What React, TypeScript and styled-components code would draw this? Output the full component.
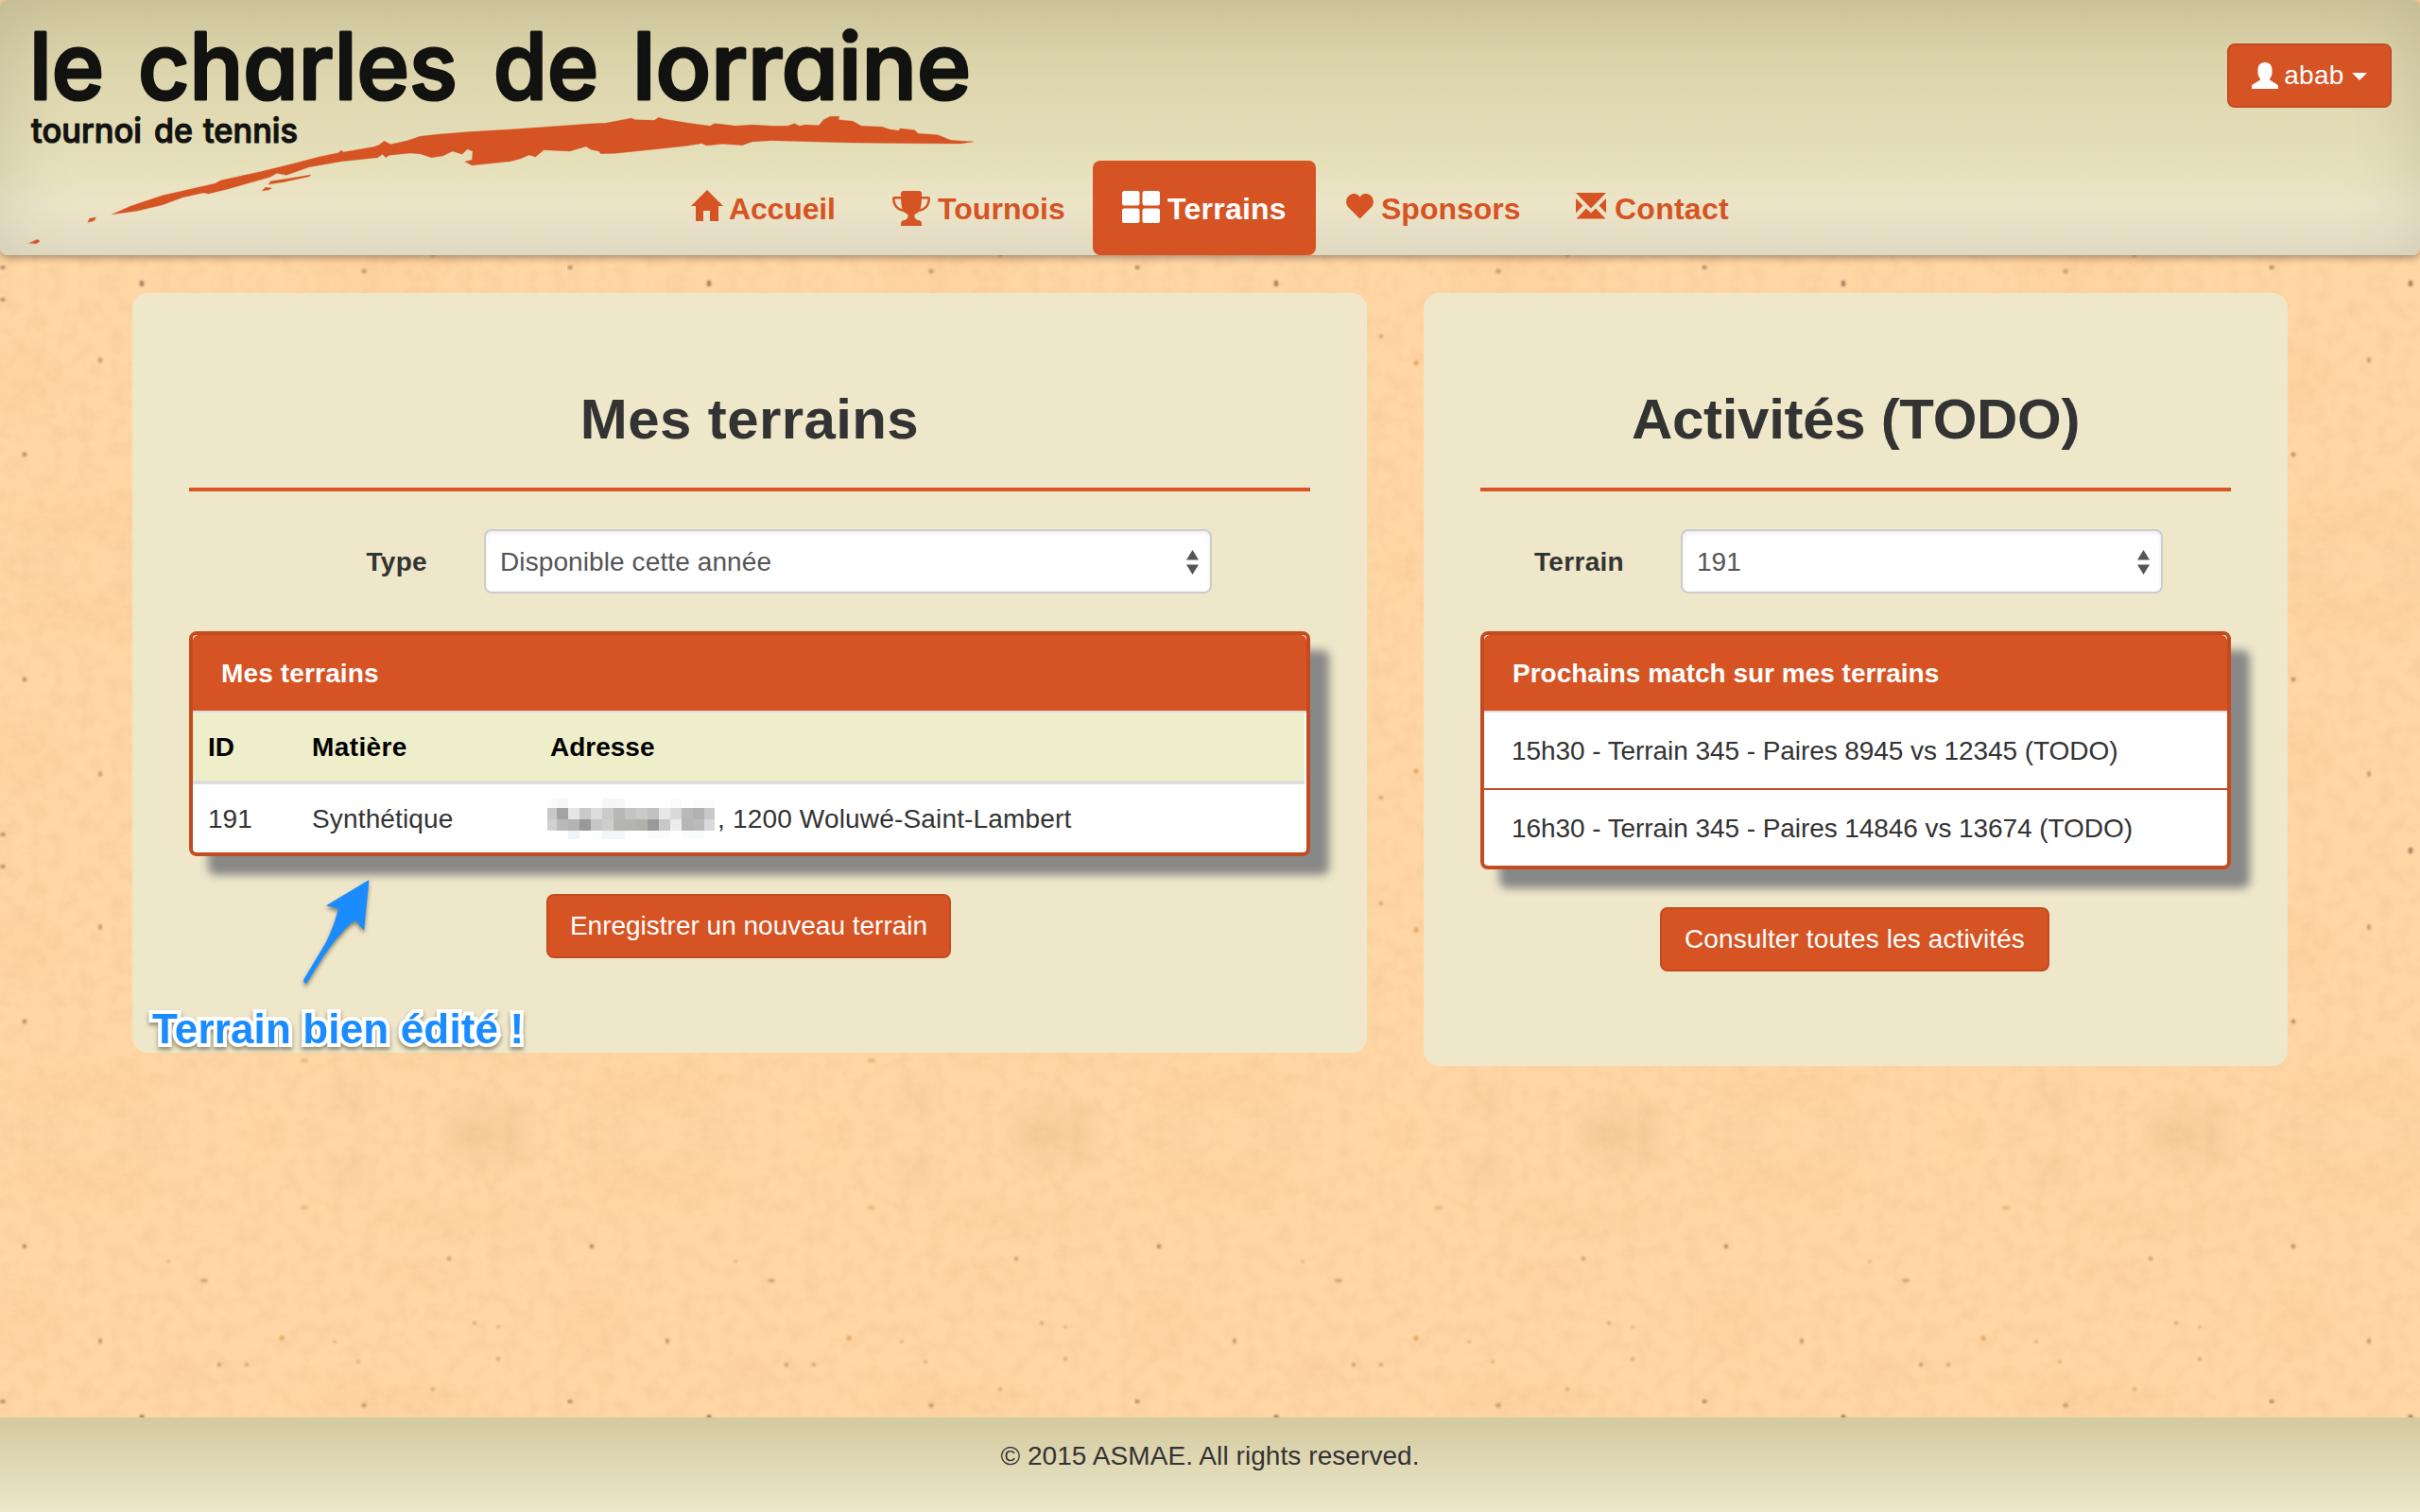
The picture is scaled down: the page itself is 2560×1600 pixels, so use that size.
import React from 'react';
import styled, { createGlobalStyle } from 'styled-components';

const ORANGE = '#d65323';
const RUST = '#c34b20';
const SAND = '#eee7ca';

const GlobalStyle = createGlobalStyle`
  * { box-sizing: border-box; }
  body {
    margin: 0;
    background: #ffd6a4;
    color: #333;
    font: 28px/40px "Liberation Sans", Arial, Helvetica, sans-serif;
  }
`;

const Page = styled.div`
  position: relative;
  isolation: isolate;
  display: flex;
  flex-direction: column;
  height: 1600px;
  overflow: hidden;
`;

const Backdrop = styled.svg`
  position: absolute;
  inset: 0;
  width: 100%;
  height: 100%;
  z-index: -1;
`;

const Header = styled.header`
  display: grid;
  grid-template-columns: 700px 1fr 700px;
  height: 270px;
  flex: none;
  border-radius: 8px;
  background: linear-gradient(#d6cda2, #e6e0bb 66%, #eee6c9 80%, #ebe5cc);
  box-shadow: inset 0 0 80px rgba(0, 0, 0, 0.11), 0 2px 8px rgba(0, 0, 0, 0.4);
`;

const Logo = styled.svg`
  width: 1040px;
  height: 270px;
  overflow: visible;
  font-family: Inter, "DejaVu Sans", sans-serif;
  font-feature-settings: "cv11" 1, "ss03" 1;
  fill: #121310;
  stroke: #121310;
  stroke-linejoin: round;
  stroke-linecap: round;
`;

const Nav = styled.nav`
  display: flex;
  align-items: flex-end;
  z-index: 1;
`;

const Tab = styled.a<{ $active?: boolean; $width: number }>`
  display: flex;
  align-items: flex-start;
  flex: none;
  width: ${p => p.$width}px;
  height: 100px;
  padding: 29px 0 0 30px;
  border-radius: 8px;
  color: ${p => (p.$active ? '#fff' : ORANGE)};
  background: ${p => (p.$active ? ORANGE : 'transparent')};
  font-size: 32px;
  line-height: 44px;
  font-weight: bold;
  white-space: nowrap;
`;

const TabText = styled.span<{ $spacing?: number }>`
  letter-spacing: ${p => p.$spacing ?? 0}px;
`;

const Icon = styled.svg<{ $top?: number; $gap: number; $left?: number }>`
  flex: none;
  fill: currentColor;
  margin: ${p => p.$top ?? 0}px ${p => p.$gap}px 0 ${p => p.$left ?? 0}px;
`;

const UserArea = styled.div`
  display: flex;
  justify-content: flex-end;
  align-items: flex-start;
  padding: 46px 30px 0 0;
`;

const Button = styled.button<{ $width: number; $spacing?: number }>`
  display: flex;
  align-items: center;
  justify-content: center;
  width: ${p => p.$width}px;
  height: 68px;
  padding: 0;
  border: 2px solid ${RUST};
  border-radius: 8px;
  background: ${ORANGE};
  color: #fff;
  font: inherit;
  letter-spacing: ${p => p.$spacing ?? 0}px;
  white-space: nowrap;
`;

const Caret = styled.span`
  margin: 2px 0 0 8px;
  border: 8px solid transparent;
  border-top-color: #fff;
  border-bottom: 0;
`;

const Main = styled.main`
  flex: 1;
  display: flex;
  align-items: flex-start;
  gap: 60px;
  padding: 40px 140px 0;
`;

const Panel = styled.section<{ $width: number }>`
  position: relative;
  width: ${p => p.$width}px;
  padding: 101px 60px 100px;
  border-radius: 16px;
  background: ${SAND};
`;

const Title = styled.h1<{ $spacing: number }>`
  margin: 0 0 39px;
  font-size: 60px;
  line-height: 66px;
  letter-spacing: ${p => p.$spacing}px;
  text-align: center;
`;

const Rule = styled.hr`
  height: 4px;
  margin: 0 0 40px;
  border: 0;
  background: #dc5423;
`;

const Field = styled.div<{ $label: number; $select: number }>`
  display: grid;
  grid-template-columns: ${p => p.$label}px ${p => p.$select}px;
  gap: 60px;
  align-items: center;
  margin-bottom: 40px;
`;

const Label = styled.label`
  padding-top: 1px;
  text-align: right;
  font-weight: bold;
  letter-spacing: 0.3px;
`;

const Select = styled.div<{ $spacing?: number }>`
  display: flex;
  align-items: center;
  justify-content: space-between;
  height: 68px;
  padding: 1px 12px 0 15px;
  border: 2px solid #ccc;
  border-radius: 8px;
  background: #fff;
  box-shadow: inset 0 2px 4px rgba(0, 0, 0, 0.08);
  color: #555;
  letter-spacing: ${p => p.$spacing ?? 0}px;
`;

const Box = styled.div`
  border: 4px solid ${RUST};
  border-radius: 8px;
  background: #fff;
  box-shadow: 20px 20px 10px #888;
`;

const BoxHead = styled.div<{ $spacing?: number }>`
  height: 82px;
  padding: 21px 30px 19px;
  border-bottom: 2px solid #ddd;
  border-radius: 6px 6px 0 0;
  background: ${ORANGE};
  color: #fff;
  font-weight: bold;
  letter-spacing: ${p => p.$spacing ?? 0}px;
`;

const Table = styled.div`
  display: grid;
  grid-template-columns: 110px 252px 1fr;
`;

const HeadRow = styled.div`
  display: grid;
  grid-template-columns: subgrid;
  grid-column: 1 / -1;
  height: 76px;
  margin-right: 2px;
  border-bottom: 4px solid #ddd;
  background: #eeeecb;
  color: #000;
  font-weight: bold;
`;

const BodyRow = styled.div`
  display: grid;
  grid-template-columns: subgrid;
  grid-column: 1 / -1;
  height: 72px;
`;

const Cell = styled.div<{ $spacing?: number }>`
  display: flex;
  align-items: center;
  height: 72px;
  padding: 1px 16px 0;
  letter-spacing: ${p => p.$spacing ?? 0}px;
  white-space: nowrap;
`;

const Mosaic = styled.span`
  display: grid;
  grid-template-columns: 10px repeat(13, 12px) 11px;
  grid-template-rows: 10px 12px 12px 9px;
  width: 177px;
  margin: 0 3px 0 -3px;
`;

const Tile = styled.i<{ $shade: string }>`
  background: ${p => p.$shade};
`;

const Item = styled.div`
  height: 80px;
  padding: 21px 29px 19px;
  letter-spacing: -0.07px;
  & + & {
    height: 82px;
    border-top: 2px solid ${RUST};
  }
`;

const Actions = styled.div`
  display: flex;
  justify-content: center;
  margin: 40px 1px 0 -1px;
`;

const Annotation = styled.div`
  position: absolute;
  left: 21px;
  bottom: -11px;
  width: 400px;
  height: 200px;
`;

const Arrow = styled.svg`
  display: block;
  width: 80px;
  height: 124px;
  margin-left: 154px;
  fill: #1a8cff;
  filter: drop-shadow(0 3px 2px rgba(60, 50, 20, 0.55));
`;

const Note = styled.div`
  margin-top: 15px;
  color: #1a8cff;
  font-size: 44px;
  line-height: 50px;
  font-weight: bold;
  letter-spacing: 0.15px;
  white-space: nowrap;
  -webkit-text-stroke: 8px #fff;
  paint-order: stroke fill;
  filter: drop-shadow(0 3px 2px rgba(60, 50, 20, 0.5));
`;

const Footer = styled.footer`
  flex: none;
  height: 100px;
  padding-top: 21px;
  background: linear-gradient(#d3ca9f, #ede7ca);
  letter-spacing: 0.07px;
  text-align: center;
`;

const FLECKS: [number, number, number, number, string][] = [
  [26, 419, 2.4, 2.4, '#a97c55'], [216, 455, 4, 1.8, '#c09468'], [106, 519, 2, 3, '#b98a66'],
  [298, 516, 2.6, 2.8, '#dd9d52'], [232, 544, 2.2, 2.2, '#bd8d60'], [261, 544, 2.2, 2, '#c59667'],
  [475, 432, 2.5, 2.4, '#c89a68'], [3, 583, 2.8, 2, '#a67b58'], [150, 599, 2.4, 2, '#7a5c3c'],
  [385, 587, 2.8, 2.6, '#bb945c'], [527, 538, 2, 2.2, '#cf9c6c'], [502, 500, 2, 2, '#cd9c6b'],
  [527, 504, 1.8, 1.6, '#c99a70'], [379, 541, 2, 1.8, '#cfa26c'], [178, 435, 2, 1.8, '#d8ab80'],
  [354, 520, 2, 1.8, '#d5a878'], [322, 378, 4, 2, '#dcb27c'], [458, 570, 2.4, 2.6, '#d6aa76'],
];

const BLOTCHES: [number, number, number, number, string, number][] = [
  [370, 340, 26, 18, '#b08a50', 0.06], [515, 312, 46, 30, '#b08a50', 0.06],
  [278, 300, 6, 12, '#f0a040', 0.1], [150, 314, 28, 7, '#b88850', 0.08],
  [48, 316, 26, 14, '#c89058', 0.05], [190, 555, 30, 10, '#e08870', 0.1],
  [90, 350, 80, 20, '#f0a050', 0.06], [440, 445, 50, 14, '#ef9f70', 0.05],
  [20, 500, 50, 40, '#f4a070', 0.05], [400, 580, 80, 14, '#f29a50', 0.07],
  [480, 390, 90, 12, '#d4a060', 0.06],
];

const Paper = () => (
  <Backdrop aria-hidden="true">
    <defs>
      <filter id="grain" x="0" y="0" width="100%" height="100%">
        <feTurbulence type="fractalNoise" baseFrequency="0.06 0.06" numOctaves="4" seed="8" stitchTiles="stitch" />
        <feColorMatrix values="0 0 0 0 0.82  0 0 0 0 0.5  0 0 0 0 0.25  1.8 0 0 0 -0.72" />
      </filter>
      <filter id="soft" x="-100%" y="-100%" width="300%" height="300%">
        <feGaussianBlur stdDeviation="10" />
      </filter>
      <filter id="fleck" x="-100%" y="-100%" width="300%" height="300%">
        <feGaussianBlur stdDeviation="0.9" />
      </filter>
      <pattern id="paper" y="300" width="600" height="600" patternUnits="userSpaceOnUse">
        <g id="half">
          <rect y="300" width="600" height="300" filter="url(#grain)" opacity="0.32" />
          {BLOTCHES.map(([x, y, rx, ry, c, o], i) => (
            <ellipse key={i} cx={x} cy={y} rx={rx} ry={ry} fill={c} opacity={o} filter="url(#soft)" />
          ))}
          {FLECKS.map(([x, y, rx, ry, c], i) => (
            <ellipse key={i} cx={x} cy={y} rx={rx} ry={ry} fill={c} opacity="0.8" filter="url(#fleck)" />
          ))}
        </g>
        <use href="#half" transform="matrix(1 0 0 -1 0 600)" />
      </pattern>
    </defs>
    <rect width="100%" height="100%" fill="url(#paper)" />
  </Backdrop>
);

const BRUSH =
  'M345 680L400 655 500 620 660 583 680 572 800 545 900 520 980 498 1040 485 1048 477 1055 483 1150 466 1165 460 1180 448 1200 458 1250 447 1290 433 1350 426 1450 418 1568 411 ' +
  '1650 405 1810 393 1860 391 1940 375 1950 380 2010 382 2023 373 2040 378 2110 390 2180 400 2195 392 2260 400 2310 396 2370 400 2420 400 2440 392 2455 400 2475 396 2515 398 2530 380 2550 370 2578 370 2575 380 ' +
  '2620 385 2645 400 2710 403 2730 410 2760 415 2765 408 2810 413 2820 424 2880 428 2920 445 2990 450 2950 456 2810 455 2610 453 2370 446 2310 450 2280 461 2220 457 2170 462 2155 455 2110 463 2010 474 1890 487 1845 488 1840 480 1815 475 1800 465 1750 480 1670 476 1645 498 1625 492 1600 503 ' +
  '1568 512 1450 525 1428 513 1450 508 1452 480 1435 473 1420 490 1390 480 1360 495 1325 500 1290 488 1260 486 1195 493 1185 500 1175 490 1160 500 1050 512 950 530 880 556 850 550 830 562 700 600 640 615 625 612 560 627 500 650 420 670Z' +
  'M805 605L815 595 835 597 825 603ZM825 585L832 575 880 568 955 555 950 560 870 578ZM270 706L275 694 295 690 290 700ZM90 772L115 760 122 766 112 773Z';

const Word = ({ x, y, end, children }: { x: number; y: number; end: number; children: string }) => (
  <text x={x} y={y} textLength={end - x} lengthAdjust="spacingAndGlyphs">{children}</text>
);

const Brand = () => (
  <Logo>
    <g fontSize="97" fontWeight="500" strokeWidth="3.2">
      <Word x={31} y={104.5} end={110}>le</Word>
      <Word x={146} y={104.5} end={484}>charles</Word>
      <Word x={522} y={104.5} end={633}>de</Word>
      <Word x={669} y={104.5} end={1027}>lorraine</Word>
    </g>
    <g fontSize="36" fontWeight="500" strokeWidth="1.2">
      <Word x={33} y={150.5} end={150}>tournoi</Word>
      <Word x={163} y={150.5} end={204}>de</Word>
      <Word x={215} y={150.5} end={315}>tennis</Word>
    </g>
    <path d={BRUSH} transform="scale(0.3444 0.3333)" fill={ORANGE} stroke={ORANGE} strokeWidth="1" />
  </Logo>
);

const Sorter = () => (
  <svg width="13" height="26" viewBox="0 0 13 26" fill="#555">
    <path d="M6.5 0L13 10.5H0ZM6.5 26L13 15.5H0Z" />
  </svg>
);

const W = '#fff';
const REDACTED = [
  ['#fbfbfb', '#f7f7f7', W, W, W, '#f5f5f5', '#f6f6f6', W, W, W, W, '#fbfbfb', W, '#fcfcfc', '#fcfcfc'],
  ['#c8c8c8', '#a3a3a3', '#e5e5e5', '#c9c9c9', '#dcdcdc', '#cacaca', '#b8b8b8', '#c4c4c4', '#cacaca', '#c1c1c1', '#e7e7e7', '#d9d9d9', '#b9b9b9', '#b2b2b2', '#c8c8c8'],
  ['#d1d1d1', '#b9b9b9', '#b3b3b3', '#999', '#c6c6c6', '#cecece', '#b5b5b1', '#b4b4b0', '#b0b0ac', '#999', '#c8c8c8', '#ececec', '#b6b6b6', '#bababa', '#d9d9d9'],
  [W, W, '#eef6fa', W, '#fcfefe', '#f0f6f9', '#f0f6f9', W, W, '#f9fdfd', '#fbfdfd', W, '#fafdfd', '#fafdfd', W],
];

export default function App() {
  return (
    <Page>
      <GlobalStyle />
      <Paper />
      <Header>
        <Brand />
        <Nav>
          <Tab $width={214}>
            <Icon $gap={6} $top={2} $left={1} width="34" height="33" viewBox="0 0 34 33">
              <path d="M17 0L34 17H29V33H20V22H13V33H5V17H0Z" />
            </Icon>
            <TabText $spacing={-0.15}>Accueil</TabText>
          </Tab>
          <Tab $width={242}>
            <Icon $gap={8} $top={3} width="40" height="37" viewBox="0 0 40 37">
              <path d="M12 0H28Q31 0 31 3V6H38Q40 6 40 8C40 16 35 21 28 22Q26 24 23.500 25C23 28 24 30 27 31Q31 31 31 35V37H9V35Q9 31 13 31C16 30 17 28 16.500 25Q14 24 12 22C5 21 0 16 0 8Q0 6 2 6H9V3Q9 0 12 0ZM9 8.500H2.500C2.800 14 5.500 18 10.500 19.200Q9 14 9 8.500ZM31 8.500Q31 14 29.500 19.200C34.500 18 37.200 14 37.500 8.500Z" fillRule="evenodd" />
            </Icon>
            <TabText $spacing={0.05}>Tournois</TabText>
          </Tab>
          <Tab $active $width={236}>
            <Icon $gap={8} $top={3} $left={1} width="40" height="34" viewBox="0 0 40 34">
              <rect width="18.500" height="15.500" rx="2.500" />
              <rect x="21.500" width="18.500" height="15.500" rx="2.500" />
              <rect y="18.500" width="18.500" height="15.500" rx="2.500" />
              <rect x="21.500" y="18.500" width="18.500" height="15.500" rx="2.500" />
            </Icon>
            <TabText $spacing={0.25}>Terrains</TabText>
          </Tab>
          <Tab $width={245}>
            <Icon $gap={8} $top={6} $left={2} width="29" height="27" viewBox="0 0 29 27">
              <path d="M14.500 26.500L2.500 14.500C-1 11 -.5 5 3 2C7-1.500 12-.5 14.500 3.500C17-.5 22-1.500 26 2C29.500 5 30 11 26.500 14.500Z" />
            </Icon>
            <TabText>Sponsors</TabText>
          </Tab>
          <Tab $width={223}>
            <Icon $gap={9} $top={5} width="32" height="28" viewBox="0 0 32 28">
              <path d="M0 0H32L16 16.500ZM0 6L7.500 13.500 0 21.500ZM32 6V21.500L24.500 13.500ZM11 16.500L16 21.500 21 16.500 31.500 27.500H.5Z" />
            </Icon>
            <TabText $spacing={0.25}>Contact</TabText>
          </Tab>
        </Nav>
        <UserArea>
          <Button $width={174} $spacing={0.3}>
            <Icon $gap={6} width="28" height="28" viewBox="0 0 28 28">
              <path d="M14 0C18.500 0 21.500 3 21.500 7.500V11.500C21.500 14 20 16 19 17.500V18.500L27 23.500Q28 24.200 28 25.500V28H0V25.500Q0 24.200 1 23.500L9 18.500V17.500C8 16 6.500 14 6.500 11.500V7.500C6.500 3 9.500 0 14 0Z" />
            </Icon>
            abab
            <Caret />
          </Button>
        </UserArea>
      </Header>

      <Main>
        <Panel $width={1306}>
          <Title $spacing={0.4}>Mes terrains</Title>
          <Rule />
          <Field $label={252} $select={770}>
            <Label>Type</Label>
            <Select $spacing={0.1}>Disponible cette année<Sorter /></Select>
          </Field>
          <Box>
            <BoxHead $spacing={0.15}>Mes terrains</BoxHead>
            <Table>
              <HeadRow>
                <Cell>ID</Cell>
                <Cell $spacing={0.4}>Matière</Cell>
                <Cell>Adresse</Cell>
              </HeadRow>
              <BodyRow>
                <Cell>191</Cell>
                <Cell $spacing={0.15}>Synthétique</Cell>
                <Cell $spacing={0.17}>
                  <Mosaic>
                    {REDACTED.flat().map((shade, i) => <Tile key={i} $shade={shade} />)}
                  </Mosaic>
                  , 1200 Woluwé-Saint-Lambert
                </Cell>
              </BodyRow>
            </Table>
          </Box>
          <Actions>
            <Button $width={428}>Enregistrer un nouveau terrain</Button>
          </Actions>
          <Annotation>
            <Arrow viewBox="315 925 80 124">
              <path d="M390.400 931L345.100 958.300 357.800 961.700C355 975 350 986 345 997L321.300 1036.500C320.500 1040 324 1042 325.500 1039C335 1023 351 997 361 988Q368 979 376.100 974.300L385.100 984.700Z" />
            </Arrow>
            <Note>Terrain bien édité !</Note>
          </Annotation>
        </Panel>

        <Panel $width={914}>
          <Title $spacing={-0.3}>Activités (TODO)</Title>
          <Rule />
          <Field $label={152} $select={510}>
            <Label>Terrain</Label>
            <Select>191<Sorter /></Select>
          </Field>
          <Box>
            <BoxHead>Prochains match sur mes terrains</BoxHead>
            <Item>15h30 - Terrain 345 - Paires 8945 vs 12345 (TODO)</Item>
            <Item>16h30 - Terrain 345 - Paires 14846 vs 13674 (TODO)</Item>
          </Box>
          <Actions>
            <Button $width={412} $spacing={0.12}>Consulter toutes les activités</Button>
          </Actions>
        </Panel>
      </Main>

      <Footer>© 2015 ASMAE. All rights reserved.</Footer>
    </Page>
  );
}
